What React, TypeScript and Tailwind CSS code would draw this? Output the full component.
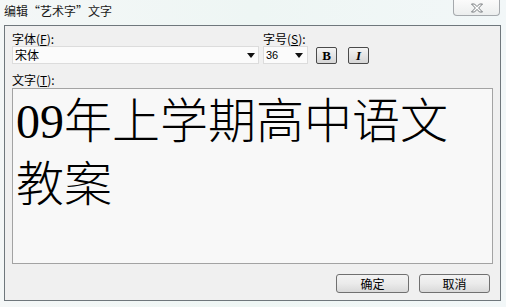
import React from "react";

const ui = { fontFamily: '"Noto Sans CJK SC", "Liberation Sans", sans-serif' };
const big = { fontFamily: '"Liberation Serif", "Noto Sans CJK SC", serif' };

function Arrow() {
  return (
    <svg width="8" height="5" viewBox="0 0 8 5" className="shrink-0">
      <path d="M0 0 H8 L4 5 Z" fill="#111" />
    </svg>
  );
}

export default function App() {
  return (
    <div
      className="w-[506px] h-[307px] flex flex-col bg-gradient-to-r from-[#f4f7f7] via-[#eef6f4] to-[#f2f7f8] text-[12px] text-black overflow-hidden"
      style={ui}
    >
      {/* title bar */}
      <div className="h-[25px] flex items-start justify-between pl-[4px] pr-[6px]">
        <span className="mt-[4px] leading-[14px] text-[12px] text-[#1a1a1a]">编辑“艺术字”文字</span>
        <button className="w-[47px] h-[16px] flex items-center justify-center border border-t-0 border-[#a5a9ad] rounded-b-[4px] bg-gradient-to-b from-[#fbfbfb] to-[#eceeee]">
          <svg width="14" height="10" viewBox="0 0 14 10">
            <path
              d="M1.5 1 H4.5 L7 3.6 L9.5 1 H12.5 L8.6 5 L12.5 9 H9.5 L7 6.4 L4.5 9 H1.5 L5.4 5 Z"
              fill="#fff"
              stroke="#6a6e72"
              strokeWidth="0.9"
              strokeLinejoin="round"
            />
          </svg>
        </button>
      </div>

      {/* dialog body */}
      <div className="ml-[4px] w-[497px] h-[276px] border border-[#6f777c] bg-[#f0f0f0] flex flex-col px-[7px] pt-[6px]">
        <div className="flex">
          <div className="flex flex-col w-[247px]">
            <div className="h-[14px] leading-[14px]">
              字体(<span className="underline">F</span>):
            </div>
            <div className="h-[18px] border border-[#dcdcdc] bg-[#fbfbfb] flex items-center justify-between pl-[2px] pr-[3px]">
              <span className="leading-[14px]">宋体</span>
              <Arrow />
            </div>
          </div>
          <div className="flex flex-col ml-[4px] w-[45px]">
            <div className="h-[14px] leading-[14px] whitespace-nowrap">
              字号(<span className="underline">S</span>):
            </div>
            <div className="h-[18px] border border-[#dcdcdc] bg-[#fbfbfb] flex items-center justify-between pl-[2px] pr-[4px]">
              <span className="leading-[14px] text-[11px]" style={{ fontFamily: '"Liberation Sans", sans-serif' }}>36</span>
              <Arrow />
            </div>
          </div>
          <div className="flex items-end gap-[11px] ml-[8px]">
            <button
              className="w-[21px] h-[17px] border border-[#4a4a4a] rounded-[2px] bg-gradient-to-b from-[#f4f4f4] to-[#d6d6d6] flex items-center justify-center font-bold text-[13px] leading-none"
              style={{ fontFamily: '"Liberation Serif", serif' }}
            >
              B
            </button>
            <button
              className="w-[21px] h-[17px] border border-[#4a4a4a] rounded-[2px] bg-gradient-to-b from-[#f4f4f4] to-[#d6d6d6] flex items-center justify-center font-bold italic text-[13px] leading-none"
              style={{ fontFamily: '"Liberation Serif", serif' }}
            >
              I
            </button>
          </div>
        </div>

        <div className="mt-[9px] h-[14px] leading-[14px]">
          文字(<span className="underline">T</span>):
        </div>
        <div className="mt-[1px] w-[481px] h-[176px] border border-[#a3a3a3] bg-[#f8f8f8] pl-[3px] pt-[1px]">
          <p className="text-[48px] leading-[63px] font-light text-black" style={big}>
            09年上学期高中语文
            <br />
            教案
          </p>
        </div>

        <div className="mt-[10px] flex justify-end gap-[10px] pr-[3px]">
          <button className="w-[73px] h-[19px] border border-[#707070] rounded-[3px] bg-gradient-to-b from-[#f3f3f3] via-[#ebebeb] to-[#d9d9d9] text-[12px] leading-none">
            确定
          </button>
          <button className="w-[71px] h-[19px] border border-[#707070] rounded-[3px] bg-gradient-to-b from-[#f3f3f3] via-[#ebebeb] to-[#d9d9d9] text-[12px] leading-none">
            取消
          </button>
        </div>
      </div>
    </div>
  );
}
